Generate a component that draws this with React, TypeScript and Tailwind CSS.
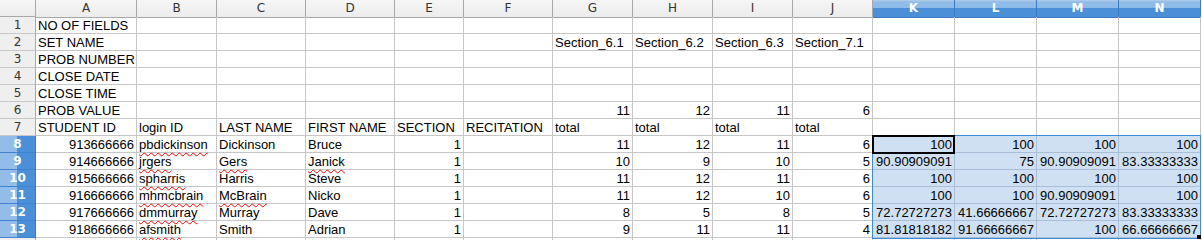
import React from 'react'

type CellValue = string | number

const columns = ['A', 'B', 'C', 'D', 'E', 'F', 'G', 'H', 'I', 'J', 'K', 'L', 'M', 'N']

// words the spell checker flags with a red squiggle
const misspelled = new Set([
    'pbdickinson', 'jrgers', 'spharris', 'mhmcbrain', 'dmmurray', 'afsmith',
    'Gers', 'McBrain', 'Janick',
])

const sheet: CellValue[][] = [
    ['NO OF FIELDS'],
    ['SET NAME', '', '', '', '', '', 'Section_6.1', 'Section_6.2', 'Section_6.3', 'Section_7.1'],
    ['PROB NUMBER'],
    ['CLOSE DATE'],
    ['CLOSE TIME'],
    ['PROB VALUE', '', '', '', '', '', 11, 12, 11, 6],
    ['STUDENT ID', 'login ID', 'LAST NAME', 'FIRST NAME', 'SECTION', 'RECITATION', 'total', 'total', 'total', 'total'],
    [913666666, 'pbdickinson', 'Dickinson', 'Bruce', 1, '', 11, 12, 11, 6, 100, 100, 100, 100],
    [914666666, 'jrgers', 'Gers', 'Janick', 1, '', 10, 9, 10, 5, 90.90909091, 75, 90.90909091, 83.33333333],
    [915666666, 'spharris', 'Harris', 'Steve', 1, '', 11, 12, 11, 6, 100, 100, 100, 100],
    [916666666, 'mhmcbrain', 'McBrain', 'Nicko', 1, '', 11, 12, 10, 6, 100, 100, 90.90909091, 100],
    [917666666, 'dmmurray', 'Murray', 'Dave', 1, '', 8, 5, 8, 5, 72.72727273, 41.66666667, 72.72727273, 83.33333333],
    [918666666, 'afsmith', 'Smith', 'Adrian', 1, '', 9, 11, 11, 4, 81.81818182, 91.66666667, 100, 66.66666667],
]

// selection K8:N13 (0-based column 10..13, row 8..13)
const isSelected = (row: number, col: number) => row >= 8 && row <= 13 && col >= 10
const isSelectedCol = (col: number) => col >= 10
const isSelectedRow = (row: number) => row >= 8 && row <= 13

const ColumnHeader = ({ label, selected }: { label: string; selected: boolean }) => (
    <div
        className={
            selected
                ? 'border-r border-b border-r-[#3b79c2] border-b-[#3b79c2] bg-[linear-gradient(to_bottom,#b7cfe9_0,#8fbbe8_2px,#8fbbe8_45%,#4a8fd8_45%)] text-center text-[12px] leading-[17px] font-bold text-white'
                : 'border-r border-b border-[#a8a8a8] bg-[linear-gradient(to_bottom,#f6f6f6,#ececec)] text-center text-[12px] leading-[17px] text-[#333333]'
        }
    >
        {label}
    </div>
)

const RowHeader = ({ label, selected }: { label: string; selected: boolean }) => (
    <div
        className={
            selected
                ? 'border-r border-b border-r-[#3b79c2] border-b-[#3f82cf] bg-[linear-gradient(to_right,#93bde8_0,#93bde8_48%,#4a8fd8_48%)] text-center text-[12px] leading-[16px] font-bold text-white'
                : 'border-r border-b border-r-[#a8a8a8] border-b-[#c8c8c8] bg-[#efefef] text-center text-[12px] leading-[16px] text-[#333333]'
        }
    >
        {label}
    </div>
)

const Cell = ({ value, selected }: { value: CellValue | undefined; selected: boolean }) => {
    const numeric = typeof value === 'number'
    const text = value === undefined ? '' : String(value)
    return (
        <div
            className={`${selected ? 'bg-[#cfe0f3] border-[#a9bfd8]' : 'border-[#c6c6c6]'} border-r border-b overflow-visible whitespace-nowrap px-[2px] pt-px text-[13px] leading-[15px] text-black ${numeric ? 'text-right' : 'text-left'}`}
        >
            {misspelled.has(text) ? (
                <span className="underline decoration-wavy decoration-[#ff0000] decoration-1 underline-offset-[3px]">{text}</span>
            ) : (
                text
            )}
        </div>
    )
}

const App = () => {
    return (
        <div className="h-[240px] w-[1202px] overflow-hidden bg-white">
            <div className="relative font-['Liberation_Sans',Arial,sans-serif]">
                <div className="grid grid-cols-[36px_101px_80px_89px_89px_69px_89px_80px_80px_80px_80px_82px_82px_82px_82px] auto-rows-[17px]">
                    {/* corner + column letters */}
                    <div className="border-r border-b border-[#a8a8a8] bg-[linear-gradient(to_bottom,#f6f6f6,#ececec)]" />
                    {columns.map((c, i) => (
                        <div key={c} className="font-['DejaVu_Sans',sans-serif]">
                            <ColumnHeader label={c} selected={isSelectedCol(i)} />
                        </div>
                    ))}

                    {sheet.map((row, r) => (
                        <React.Fragment key={r}>
                            <div className="font-['DejaVu_Sans',sans-serif]">
                                <RowHeader label={String(r + 1)} selected={isSelectedRow(r + 1)} />
                            </div>
                            {columns.map((c, ci) => (
                                <Cell key={c} value={row[ci]} selected={isSelected(r + 1, ci)} />
                            ))}
                        </React.Fragment>
                    ))}

                    {/* next row, only its top edge shows */}
                    <div className="border-r border-[#a8a8a8] bg-[#efefef]" />
                    {columns.map((c) => (
                        <div key={c} className="border-r border-[#c6c6c6]" />
                    ))}
                </div>

                {/* selection outline, cursor cell and fill handle */}
                <div className="pointer-events-none absolute left-[872px] top-[135px] h-[104px] w-[329px] border border-[#3d8ad9]" />
                <div className="pointer-events-none absolute left-[872px] top-[135px] h-[19px] w-[83px] border-2 border-black" />
                <div className="pointer-events-none absolute left-[1197px] top-[235px] h-[4px] w-[4px] bg-black" />
            </div>
        </div>
    )
}

export default App
